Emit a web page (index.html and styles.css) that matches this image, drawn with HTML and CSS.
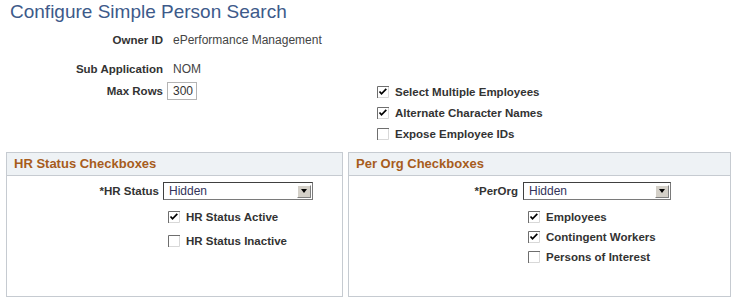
FILE: index.html
```html
<!DOCTYPE html>
<html lang="en">
<head>
    <meta charset="UTF-8">
    <title>Configure Simple Person Search</title>
    <link rel="stylesheet" href="styles.css">
</head>
<body>
    <div class="page">
        <h1 class="title">Configure Simple Person Search</h1>

        <div class="top">
            <div class="fields">
                <span class="label spaced">Owner ID</span>
                <span class="value spaced">ePerformance Management</span>
                <span class="label">Sub Application</span>
                <span class="value">NOM</span>
                <span class="label">Max Rows</span>
                <span class="rows-box">300</span>
            </div>

            <div class="options">
                <label class="check">
                    <svg class="cb" width="12" height="12" viewBox="0 0 12 12"><rect x="0" y="0" width="12" height="12" fill="#fff"/><path d="M0.5 12V0.5H12" stroke="#6e6e6e" fill="none"/><path d="M11.5 1V11.5H1" stroke="#d8d8d8" fill="none"/><path d="M2.5 5.5L4.5 7.8L9.3 2.8" stroke="#000" stroke-width="1.7" fill="none"/></svg>
                    <span>Select Multiple Employees</span>
                </label>
                <label class="check">
                    <svg class="cb" width="12" height="12" viewBox="0 0 12 12"><rect x="0" y="0" width="12" height="12" fill="#fff"/><path d="M0.5 12V0.5H12" stroke="#6e6e6e" fill="none"/><path d="M11.5 1V11.5H1" stroke="#d8d8d8" fill="none"/><path d="M2.5 5.5L4.5 7.8L9.3 2.8" stroke="#000" stroke-width="1.7" fill="none"/></svg>
                    <span>Alternate Character Names</span>
                </label>
                <label class="check">
                    <svg class="cb" width="12" height="12" viewBox="0 0 12 12"><rect x="0" y="0" width="12" height="12" fill="#fff"/><path d="M0.5 12V0.5H12" stroke="#6e6e6e" fill="none"/><path d="M11.5 1V11.5H1" stroke="#d8d8d8" fill="none"/></svg>
                    <span>Expose Employee IDs</span>
                </label>
            </div>
        </div>

        <div class="groups">
            <div class="group group-hr">
                <div class="group-head">HR Status Checkboxes</div>
                <div class="group-body">
                    <span class="label">*HR Status</span>
                    <div class="dropdown">
                        <span>Hidden</span>
                        <span class="drop-btn"><i class="arrow"></i></span>
                    </div>
                    <div class="group-checks">
                        <label class="check">
                            <svg class="cb" width="12" height="12" viewBox="0 0 12 12"><rect x="0" y="0" width="12" height="12" fill="#fff"/><path d="M0.5 12V0.5H12" stroke="#6e6e6e" fill="none"/><path d="M11.5 1V11.5H1" stroke="#d8d8d8" fill="none"/><path d="M2.5 5.5L4.5 7.8L9.3 2.8" stroke="#000" stroke-width="1.7" fill="none"/></svg>
                            <span>HR Status Active</span>
                        </label>
                        <label class="check">
                            <svg class="cb" width="12" height="12" viewBox="0 0 12 12"><rect x="0" y="0" width="12" height="12" fill="#fff"/><path d="M0.5 12V0.5H12" stroke="#6e6e6e" fill="none"/><path d="M11.5 1V11.5H1" stroke="#d8d8d8" fill="none"/></svg>
                            <span>HR Status Inactive</span>
                        </label>
                    </div>
                </div>
            </div>

            <div class="group group-org">
                <div class="group-head">Per Org Checkboxes</div>
                <div class="group-body">
                    <span class="label">*PerOrg</span>
                    <div class="dropdown">
                        <span>Hidden</span>
                        <span class="drop-btn"><i class="arrow"></i></span>
                    </div>
                    <div class="group-checks">
                        <label class="check">
                            <svg class="cb" width="12" height="12" viewBox="0 0 12 12"><rect x="0" y="0" width="12" height="12" fill="#fff"/><path d="M0.5 12V0.5H12" stroke="#6e6e6e" fill="none"/><path d="M11.5 1V11.5H1" stroke="#d8d8d8" fill="none"/><path d="M2.5 5.5L4.5 7.8L9.3 2.8" stroke="#000" stroke-width="1.7" fill="none"/></svg>
                            <span>Employees</span>
                        </label>
                        <label class="check">
                            <svg class="cb" width="12" height="12" viewBox="0 0 12 12"><rect x="0" y="0" width="12" height="12" fill="#fff"/><path d="M0.5 12V0.5H12" stroke="#6e6e6e" fill="none"/><path d="M11.5 1V11.5H1" stroke="#d8d8d8" fill="none"/><path d="M2.5 5.5L4.5 7.8L9.3 2.8" stroke="#000" stroke-width="1.7" fill="none"/></svg>
                            <span>Contingent Workers</span>
                        </label>
                        <label class="check">
                            <svg class="cb" width="12" height="12" viewBox="0 0 12 12"><rect x="0" y="0" width="12" height="12" fill="#fff"/><path d="M0.5 12V0.5H12" stroke="#6e6e6e" fill="none"/><path d="M11.5 1V11.5H1" stroke="#d8d8d8" fill="none"/></svg>
                            <span>Persons of Interest</span>
                        </label>
                    </div>
                </div>
            </div>
        </div>
    </div>
</body>
</html>
```

FILE: styles.css
```css
body {
    margin: 0;
    background: #fff;
    font-family: "Liberation Sans", Arial, sans-serif;
    font-size: 12px;
    color: #333;
}
.page {
    padding: 0 6px;
}
.title {
    margin: 0 0 0 4px;
    font-size: 19px;
    line-height: 24px;
    font-weight: normal;
    color: #3d5a8a;
}
.top {
    display: flex;
    align-items: flex-start;
}
.fields {
    width: 371px;
    margin-top: 9px;
    display: grid;
    grid-template-columns: 157px auto;
    column-gap: 4px;
    row-gap: 6px;
    align-items: center;
}
.label {
    text-align: right;
    font-size: 11.5px;
    font-weight: bold;
    color: #333;
    line-height: 14px;
}
.value {
    padding-left: 6px;
    line-height: 14px;
    color: #444;
}
.spaced {
    margin-bottom: 9px;
}
.rows-box {
    justify-self: start;
    width: 30px;
    height: 18px;
    box-sizing: border-box;
    border: 1px solid #b4b4b4;
    text-align: right;
    padding-right: 3px;
    line-height: 16px;
    color: #333;
}
.options {
    margin-top: 57px;
}
.check {
    display: flex;
    align-items: center;
    gap: 6px;
    height: 21px;
    font-size: 11.5px;
    font-weight: bold;
    color: #333;
}
.cb {
    flex: none;
}
.groups {
    display: flex;
    gap: 5px;
    margin-top: 8px;
}
.group {
    box-sizing: border-box;
    height: 145px;
    border: 1px solid #c6cbd1;
}
.group-hr {
    width: 337px;
}
.group-org {
    flex: 1;
}
.group-head {
    height: 22px;
    line-height: 22px;
    padding-left: 7px;
    background: #eef2f5;
    border-bottom: 1px solid #c6cbd1;
    font-size: 13px;
    font-weight: bold;
    color: #a75c1c;
}
.group-body {
    display: grid;
    align-items: center;
    padding-top: 6px;
}
.group-hr .group-body {
    grid-template-columns: 152px 150px;
    column-gap: 4px;
}
.group-org .group-body {
    grid-template-columns: 169px 148px;
    column-gap: 5px;
}
.dropdown {
    display: flex;
    align-items: center;
    justify-content: space-between;
    height: 18px;
    box-sizing: border-box;
    border: 1px solid #7a7a7a;
    border-top-color: #404040;
    border-left-color: #404040;
    padding: 0 1px 0 5px;
    color: #33335a;
}
.drop-btn {
    display: flex;
    align-items: center;
    justify-content: center;
    width: 14px;
    height: 13px;
    box-sizing: border-box;
    background: #d4d0c8;
    border: 1px solid #808080;
    border-top-color: #fff;
    border-left-color: #fff;
}
.arrow {
    width: 0;
    height: 0;
    border-left: 3.5px solid transparent;
    border-right: 3.5px solid transparent;
    border-top: 4px solid #000;
}
.group-checks {
    grid-column: 2;
    padding-left: 5px;
}
.group-hr .group-checks {
    margin-top: 5px;
}
.group-hr .check {
    height: 24px;
}
.group-org .group-checks {
    margin-top: 7px;
}
.group-org .check {
    height: 20px;
}
```
